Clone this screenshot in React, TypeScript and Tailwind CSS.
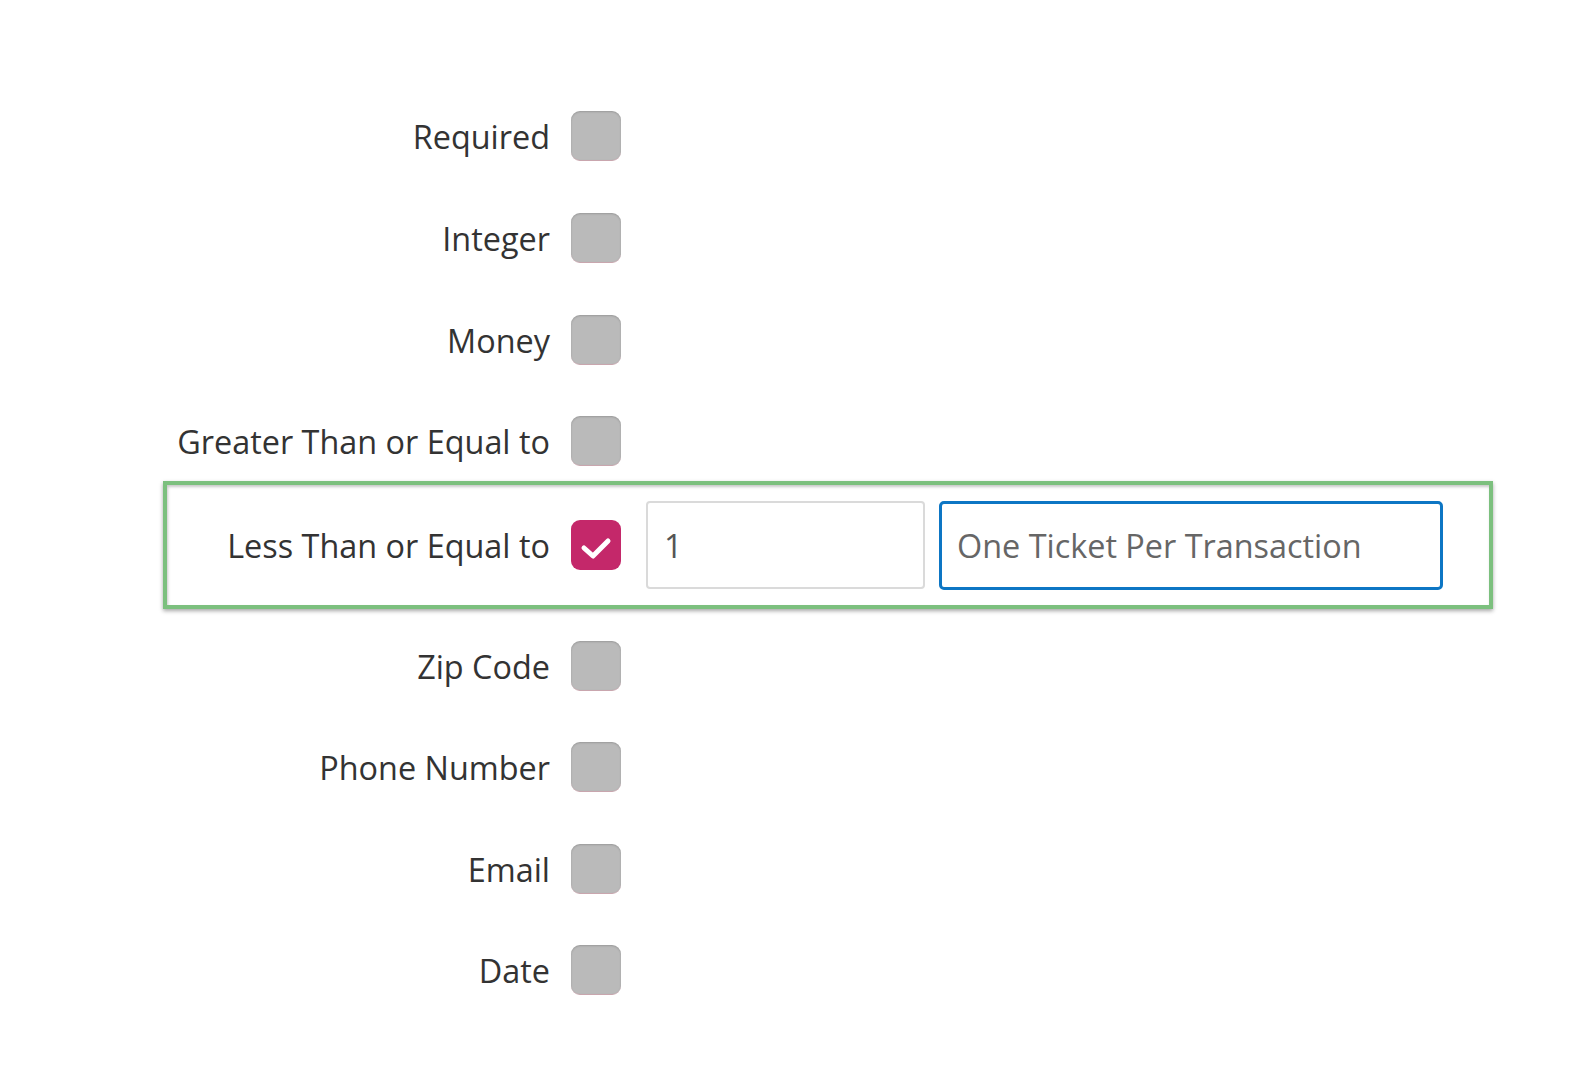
import React from "react";

const font = { fontFamily: '"Open Sans", "Noto Sans", sans-serif' };

function Box({ checked = false }: { checked?: boolean }) {
  if (checked) {
    return (
      <div className="w-[50px] h-[50px] shrink-0 rounded-[9px] bg-[#c4286a] flex items-center justify-center">
        <svg width="50" height="50" viewBox="0 0 50 50">
          <polyline points="13,28 22,36 37,21" fill="none" stroke="#ffffff" strokeWidth="5" strokeLinecap="round" strokeLinejoin="round" />
        </svg>
      </div>
    );
  }
  return (
    <div className="w-[50px] h-[50px] shrink-0 rounded-[9px] bg-[#bababa] border-b border-[#c9a6ae] shadow-[inset_0_1px_2px_rgba(0,0,0,0.18)]" />
  );
}

function Row({ label, mt }: { label: string; mt: string }) {
  return (
    <div className={`flex items-center h-[50px] ${mt}`}>
      <div className="w-[550px] text-right text-[32.4px] leading-none text-[#333333]">{label}</div>
      <div className="ml-[21px]">
        <Box />
      </div>
    </div>
  );
}

export default function App() {
  return (
    <div className="w-[1572px] h-[1076px] bg-white overflow-hidden" style={font}>
      <div className="pt-[111px] flex flex-col">
        <Row label="Required" mt="mt-0" />
        <Row label="Integer" mt="mt-[52px]" />
        <Row label="Money" mt="mt-[52px]" />
        <Row label="Greater Than or Equal to" mt="mt-[51px]" />
        <div className="mt-[15px] ml-[163px] w-[1330px] h-[128px] border-4 border-[#7cc07e] shadow-[0_2px_4px_rgba(0,0,0,0.35),inset_1px_2px_3px_rgba(0,0,0,0.22)] flex items-center">
          <div className="w-[383px] text-right text-[32.4px] leading-none text-[#333333]">Less Than or Equal to</div>
          <div className="ml-[21px]">
            <Box checked />
          </div>
          <div className="ml-[25px] w-[279px] h-[88px] border-2 border-[#dadada] rounded-[4px] flex items-center pl-[16px] text-[32.4px] text-[#555555]">
            1
          </div>
          <div className="ml-[14px] w-[504px] h-[89px] border-[3px] border-[#0d76c4] rounded-[5px] flex items-center pl-[15px] text-[32.4px] text-[#666666]">
            One Ticket Per Transaction
          </div>
        </div>
        <Row label="Zip Code" mt="mt-[32px]" />
        <Row label="Phone Number" mt="mt-[51px]" />
        <Row label="Email" mt="mt-[52px]" />
        <Row label="Date" mt="mt-[51px]" />
      </div>
    </div>
  );
}
